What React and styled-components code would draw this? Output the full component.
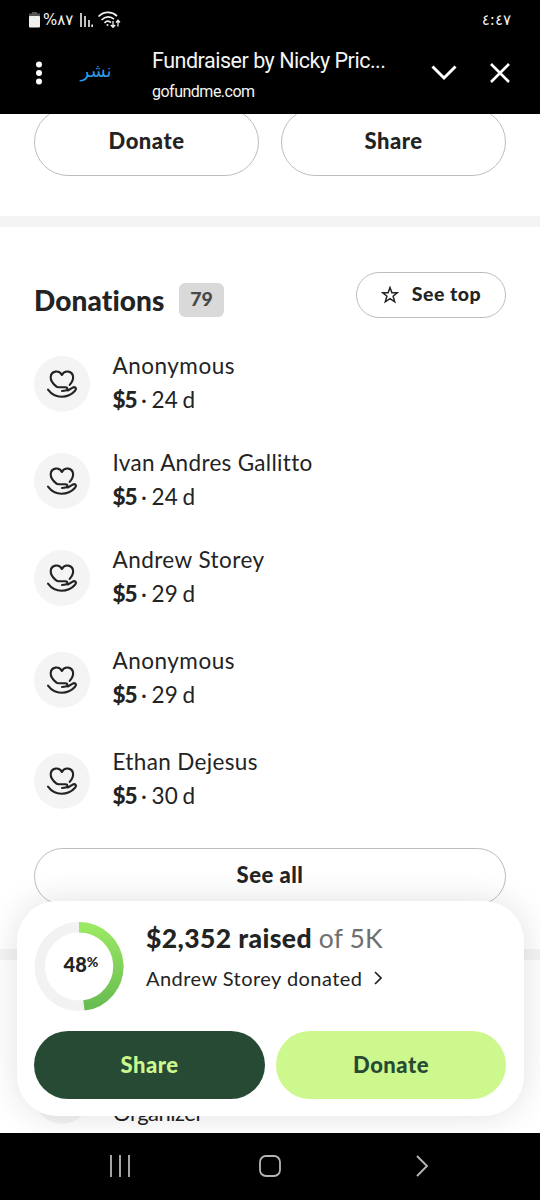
import React from 'react';
import styled, { createGlobalStyle } from 'styled-components';

const Global = createGlobalStyle`
  * { box-sizing: border-box; }
  body { margin: 0; background: #fff; }
  button { margin: 0; padding: 0; border: 0; background: none; font: inherit; color: inherit; cursor: pointer; }
  svg { display: block; flex: none; }
`;

const Screen = styled.div`
  width: 540px;
  height: 1200px;
  display: grid;
  grid-template-rows: 114px 1019px 67px;
  overflow: hidden;
  background: #fff;
  color: #232323;
  font-family: Lato, 'Noto Sans', sans-serif;
  font-variant-ligatures: none;
`;

const Top = styled.header`
  background: #000;
  color: #f4f4f4;
  font-family: Roboto, 'DejaVu Sans', sans-serif;
`;

const StatusBar = styled.div`
  height: 40px;
  padding: 0 29px 0 29px;
  display: flex;
  align-items: center;
  justify-content: space-between;
`;

const StatusIcons = styled.div`
  display: flex;
  align-items: center;
`;

const StatusText = styled.span`
  font: 15px/20px 'DejaVu Sans', sans-serif;
  direction: ltr;
  unicode-bidi: bidi-override;
  white-space: nowrap;
  margin-left: ${(p) => p.$ml || 0}px;
  margin-right: ${(p) => p.$mr || 0}px;
`;

const WifiIcon = styled.svg`
  margin-left: 4px;
`;

const BrowserBar = styled.div`
  height: 74px;
  padding: 0 30px 8px 35px;
  display: flex;
  align-items: center;
`;

const Publish = styled.button`
  width: 34px;
  margin: 0 39px 4px 36px;
  color: #2f9be6;
  font: 18px/24px 'DejaVu Sans', sans-serif;
`;

const PageInfo = styled.div`
  flex: 1;
  display: flex;
  flex-direction: column;
  white-space: nowrap;
`;

const PageTitle = styled.div`
  margin-top: 3px;
  font-size: 21.5px;
  line-height: 30px;
  letter-spacing: -0.48px;
`;

const PageHost = styled.div`
  font-size: 16px;
  line-height: 24px;
  margin-top: 4px;
  letter-spacing: -0.5px;
`;

const HeaderActions = styled.div`
  display: flex;
  align-items: center;
  gap: 33px;
`;

const Main = styled.main`
  position: relative;
  overflow: hidden;
  background: #fff;
`;

const PillRow = styled.div`
  display: grid;
  grid-template-columns: 1fr 1fr;
  gap: 22px;
  margin-top: -6px;
  padding: 0 34px;
`;

const Pill = styled.button`
  height: ${(p) => p.$h}px;
  border: 1px solid #bdbdbd;
  border-radius: 34px;
  padding-bottom: ${(p) => p.$lift || 0}px;
  display: flex;
  align-items: center;
  justify-content: center;
  gap: 13px;
  font-size: ${(p) => p.$size || 22}px;
  font-weight: 900;
  letter-spacing: 0.5px;
  white-space: nowrap;
`;

const StarIcon = styled.svg`
  margin-top: 4px;
`;

const Divider = styled.div`
  height: 11px;
  margin-top: ${(p) => p.$mt}px;
  background: #f4f4f4;
`;

const SectionHead = styled.div`
  display: flex;
  align-items: flex-start;
  padding: 45px 34px 0;
  height: 129px;

  ${Pill} { margin-left: auto; width: 150px; }
`;

const Heading = styled.h2`
  width: 133px;
  margin: 11px 12px 0 0;
  font-size: 28px;
  line-height: 34px;
  font-weight: 900;
  letter-spacing: 0.1px;
  white-space: nowrap;
`;

const Count = styled.span`
  width: 45px;
  height: 34px;
  margin-top: 11px;
  border-radius: 6px;
  background: #d9d9d9;
  color: #484848;
  font-size: 19.5px;
  line-height: 31px;
  font-weight: 900;
  text-align: center;
`;

const DonationList = styled.ul`
  list-style: none;
  margin: 0;
  padding: 0 34px;
`;

const Donation = styled.li`
  display: flex;
  gap: 22.5px;
  height: ${(p) => p.$h}px;
`;

const Avatar = styled.div`
  width: 56px;
  height: 56px;
  border-radius: 50%;
  background: #f4f4f4;
`;

const DonationText = styled.div`
  margin-top: ${(p) => p.$rise}px;
  font-size: 22.5px;
  line-height: 33.5px;
  white-space: nowrap;
`;

const Name = styled.div`
  letter-spacing: ${(p) => p.$track}px;
`;

const Amount = styled.div`
  letter-spacing: 0.2px;
  word-spacing: -1.5px;
  b { font-weight: 900; letter-spacing: -1px; }
`;

const SeeAll = styled.div`
  padding: 0 34px;
  ${Pill} { width: 100%; }
`;

const Organizer = styled.div`
  display: flex;
  gap: 23px;
  padding: 108px 34px 0;
  font-size: 22px;
  line-height: 90px;
  letter-spacing: -0.5px;
`;

const Sheet = styled.section`
  position: absolute;
  left: 17px;
  right: 16px;
  top: 787px;
  height: 215px;
  padding: 20px 17px 17px;
  border-radius: 40px;
  background: #fff;
  box-shadow: 0 0 34px rgba(0, 0, 0, 0.12);
`;

const Summary = styled.div`
  display: flex;
  gap: 22px;
  height: 110px;
`;

const Progress = styled.div`
  display: grid;
  width: 90px;
  height: 91px;
  > * { grid-area: 1 / 1; }
`;

const Percent = styled.div`
  align-self: center;
  justify-self: center;
  padding: 0 0 5px 4px;
  font-size: 20px;
  font-weight: 900;
  line-height: 24px;
  display: flex;
  align-items: flex-start;
  small { font-size: 14px; line-height: 20px; }
`;

const Raised = styled.div`
  font-size: 26.5px;
  line-height: 34px;
  color: #6f6f6f;
  white-space: nowrap;
  letter-spacing: 0.1px;
  b { font-weight: 900; color: #232323; letter-spacing: 0.4px; }
`;

const Latest = styled.div`
  margin-top: 10px;
  display: flex;
  align-items: center;
  gap: 12px;
  font-size: 20px;
  line-height: 26px;
  letter-spacing: 0.45px;
  white-space: nowrap;
`;

const Actions = styled.div`
  display: grid;
  grid-template-columns: 231px 230px;
  gap: 11px;
`;

const Action = styled.button`
  height: 68px;
  border-radius: 34px;
  padding-bottom: 2px;
  font-size: 22px;
  font-weight: 900;
  letter-spacing: 0.5px;
  background: ${(p) => (p.$dark ? '#274a34' : '#ccf88e')};
  color: ${(p) => (p.$dark ? '#ccf88e' : '#274a34')};
`;

const SystemNav = styled.nav`
  background: #000;
  padding: 0 111px 2px 109px;
  display: grid;
  grid-template-columns: 150px 1fr auto;
  align-items: center;
`;

const HeartHand = () => (
  <svg width="56" height="56" viewBox="0 0 56 56" fill="none" stroke="#232323" strokeWidth="2.1" strokeLinecap="round" strokeLinejoin="round">
    <path d="M35.700 28.900C38 26.300 39.300 24 39.100 21 38.600 14.700 30.600 13.700 27.900 19 25.200 13.700 17.200 14.700 16.700 21 16.500 25 18.700 27.600 22.200 30.400 23 31.100 23.600 31.300 24.600 31.300H31.500C33.800 31.300 34 34 31.700 34.600 30.600 34.900 29.400 35 28 35" />
    <path d="M14 33.700C17.500 38.400 21.900 40.800 27.500 40.800 33.500 40.800 37.500 38.700 40.800 35 43.300 32.300 41 30.200 38.300 31.800L33.800 34.500" />
  </svg>
);

const donations = [
  { name: 'Anonymous', age: '24 d', h: 97, track: 0.5, rise: -7 },
  { name: 'Ivan Andres Gallitto', age: '24 d', h: 97, track: 0.3, rise: -7 },
  { name: 'Andrew Storey', age: '29 d', h: 102, track: 0.45, rise: -7 },
  { name: 'Anonymous', age: '29 d', h: 101, track: 0.5, rise: -8 },
  { name: 'Ethan Dejesus', age: '30 d', h: 95, track: 0.35, rise: -8 },
];

export default function App() {
  return (
    <Screen>
      <Global />
      <Top>
        <StatusBar>
          <StatusIcons>
            <svg width="11" height="16" viewBox="0 0 11 16">
              <path d="M3 0h5v1.500h3V5H0V1.500h3z" fill="#555" />
              <rect y="4" width="11" height="11.500" rx="1" fill="#f0f0f0" />
            </svg>
            <StatusText $ml={3} $mr={6}>%٨٧</StatusText>
            <svg width="14" height="15" viewBox="0 0 14 15" stroke="#f0f0f0" strokeWidth="1.600">
              <path d="M2 0v14M6 3v11M10 7v7M13.200 11.500v2.500" />
            </svg>
            <WifiIcon width="24" height="18" viewBox="0 0 24 18" fill="none" stroke="#f0f0f0" strokeWidth="1.700">
              <path d="M1.500 5.500C7 .2 14.500.2 20 5M4.500 9C8.500 5 13.500 5 17 8.200M7.500 12c2-2.200 4.500-2.200 6.500-.4" />
              <circle cx="10.500" cy="14" r="1" fill="#f0f0f0" stroke="none" />
              <path d="M16 10v6M13.800 14l2.200 2.300 2.200-2.300M21 15.500v-6M19 11.500l2-2.200 2 2.200" strokeWidth="1.300" />
            </WifiIcon>
          </StatusIcons>
          <StatusText>٤:٤٧</StatusText>
        </StatusBar>
        <BrowserBar>
          <svg width="8" height="24" viewBox="0 0 8 24" fill="#fff">
            <circle cx="4" cy="3.500" r="3" />
            <circle cx="4" cy="12" r="3" />
            <circle cx="4" cy="20.500" r="3" />
          </svg>
          <Publish>نشر</Publish>
          <PageInfo>
            <PageTitle>Fundraiser by Nicky Pric...</PageTitle>
            <PageHost>gofundme.com</PageHost>
          </PageInfo>
          <HeaderActions>
            <svg width="26" height="16" viewBox="0 0 26 16" fill="none" stroke="#fff" strokeWidth="3">
              <path d="M1.500 1.500L13 13 24.500 1.500" />
            </svg>
            <svg width="20" height="20" viewBox="0 0 20 20" fill="none" stroke="#fff" strokeWidth="2.600">
              <path d="M1 1l18 18M19 1L1 19" />
            </svg>
          </HeaderActions>
        </BrowserBar>
      </Top>

      <Main>
        <PillRow>
          <Pill $h={68} $lift={3}>Donate</Pill>
          <Pill $h={68} $lift={3}>Share</Pill>
        </PillRow>
        <Divider $mt={40} />
        <SectionHead>
          <Heading>Donations</Heading>
          <Count>79</Count>
          <Pill $h={46} $lift={4} $size={19.5}>
            <StarIcon width="18" height="18" viewBox="0 0 18 18" fill="none" stroke="#232323" strokeWidth="1.500">
              <path d="M9 1.500l1.900 5.200h5.500l-4.300 3.500 1.600 5.600L9 12.600l-4.700 3.200 1.600-5.600L1.600 6.700h5.500z" />
            </StarIcon>
            See top
          </Pill>
        </SectionHead>
        <DonationList>
          {donations.map((d, i) => (
            <Donation key={i} $h={d.h}>
              <Avatar><HeartHand /></Avatar>
              <DonationText $rise={d.rise}>
                <Name $track={d.track}>{d.name}</Name>
                <Amount><b>$5</b> · {d.age}</Amount>
              </DonationText>
            </Donation>
          ))}
        </DonationList>
        <SeeAll>
          <Pill $h={57} $lift={4}>See all</Pill>
        </SeeAll>
        <Divider $mt={44} />
        <Organizer>
          <Avatar />
          <span>Organizer</span>
        </Organizer>

        <Sheet>
          <Summary>
            <Progress>
              <svg width="90" height="91" viewBox="0 0 91 91" fill="none" strokeWidth="10.500">
                <defs>
                  <linearGradient id="ring" x1="0" y1="0" x2="0" y2="1">
                    <stop offset="0" stopColor="#9be865" />
                    <stop offset="1" stopColor="#69bd50" />
                  </linearGradient>
                </defs>
                <circle cx="45.500" cy="45.500" r="39.700" stroke="#f2f2f2" />
                <path d="M45.500 5.800A39.700 39.700 0 0 1 50.500 84.900" stroke="url(#ring)" />
              </svg>
              <Percent>48<small>%</small></Percent>
            </Progress>
            <div>
              <Raised><b>$2,352 raised</b> of 5K</Raised>
              <Latest>
                Andrew Storey donated
                <svg width="8" height="14" viewBox="0 0 8 14" fill="none" stroke="#232323" strokeWidth="1.700">
                  <path d="M1 1l6 6-6 6" />
                </svg>
              </Latest>
            </div>
          </Summary>
          <Actions>
            <Action $dark>Share</Action>
            <Action>Donate</Action>
          </Actions>
        </Sheet>
      </Main>

      <SystemNav>
        <svg width="22" height="22" viewBox="0 0 22 22" stroke="#b5b5b5" strokeWidth="1.800">
          <path d="M2 0v22M11 0v22M20 0v22" />
        </svg>
        <svg width="22" height="22" viewBox="0 0 22 22" fill="none" stroke="#b5b5b5" strokeWidth="1.800">
          <rect x="1" y="1" width="20" height="20" rx="6" />
        </svg>
        <svg width="14" height="22" viewBox="0 0 14 22" fill="none" stroke="#b5b5b5" strokeWidth="1.900">
          <path d="M2 1l10 10L2 21" />
        </svg>
      </SystemNav>
    </Screen>
  );
}
